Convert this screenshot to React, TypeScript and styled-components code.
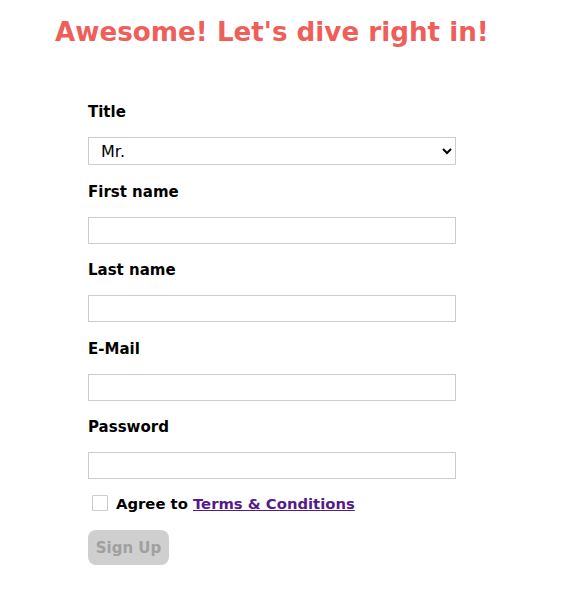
import React from "react";
import styled, { createGlobalStyle } from "styled-components";

const Global = createGlobalStyle`
  html, body { margin: 0; padding: 0; background: #ffffff; }
  body { font-family: "DejaVu Sans", "Noto Sans", sans-serif; color: #000; }
`;

const Page = styled.div`
  width: 582px;
  padding: 14px 0 0 55px;
  box-sizing: border-box;
`;

const Heading = styled.h1`
  margin: 0;
  font-size: 26.2px;
  line-height: 36px;
  font-weight: 700;
  color: #ef5f5a;
`;

const Form = styled.form`
  display: flex;
  flex-direction: column;
  width: 368px;
  margin: 51px 0 0 33px;
`;

const Field = styled.div`
  display: flex;
  flex-direction: column;
  gap: 15px;
  margin-bottom: 15.5px;
`;

const Label = styled.label`
  padding-top: 1px;
  font-size: 15px;
  line-height: 20px;
  font-weight: 700;
`;

const Select = styled.select`
  height: 28px;
  border: 1px solid #cccccc;
  border-radius: 0;
  background: #fff;
  font-family: "DejaVu Sans", sans-serif;
  font-size: 16px;
  padding: 0 0 0 8px;
  color: #000;
`;

const Input = styled.input`
  height: 27px;
  box-sizing: border-box;
  border: 1px solid #cccccc;
  border-radius: 0;
  padding: 0 6px;
  font-family: inherit;
  font-size: 14px;
  outline: none;
`;

const AgreeRow = styled.div`
  display: flex;
  align-items: center;
  gap: 8px;
  margin: -1.5px 0 0 4px;
  height: 20px;
`;

const Check = styled.input`
  appearance: none;
  width: 16px;
  height: 16px;
  margin: 0;
  border: 1px solid #cccccc;
  border-radius: 1px;
  background: #fff;
`;

const AgreeText = styled.span`
  font-size: 14.8px;
  font-weight: 700;
`;

const Link = styled.a`
  color: #551a8b;
  text-decoration: underline;
`;

const Button = styled.button`
  margin-top: 17px;
  align-self: flex-start;
  width: 81px;
  height: 35px;
  border: none;
  border-radius: 8px;
  background: #cfcfcf;
  color: #a0a0a0;
  font-family: inherit;
  font-size: 15px;
  font-weight: 700;
  padding: 0;
`;

export default function App() {
  const fields = ["First name", "Last name", "E-Mail", "Password"];
  return (
    <>
      <Global />
      <Page>
        <Heading>Awesome! Let's dive right in!</Heading>
        <Form onSubmit={(e) => e.preventDefault()}>
          <Field>
            <Label>Title</Label>
            <Select defaultValue="Mr.">
              <option>Mr.</option>
              <option>Mrs.</option>
              <option>Ms.</option>
            </Select>
          </Field>
          {fields.map((f) => (
            <Field key={f}>
              <Label>{f}</Label>
              <Input type={f === "Password" ? "password" : f === "E-Mail" ? "email" : "text"} />
            </Field>
          ))}
          <AgreeRow>
            <Check type="checkbox" />
            <AgreeText>
              Agree to <Link href="#">Terms &amp; Conditions</Link>
            </AgreeText>
          </AgreeRow>
          <Button type="submit" disabled>Sign Up</Button>
        </Form>
      </Page>
    </>
  );
}
